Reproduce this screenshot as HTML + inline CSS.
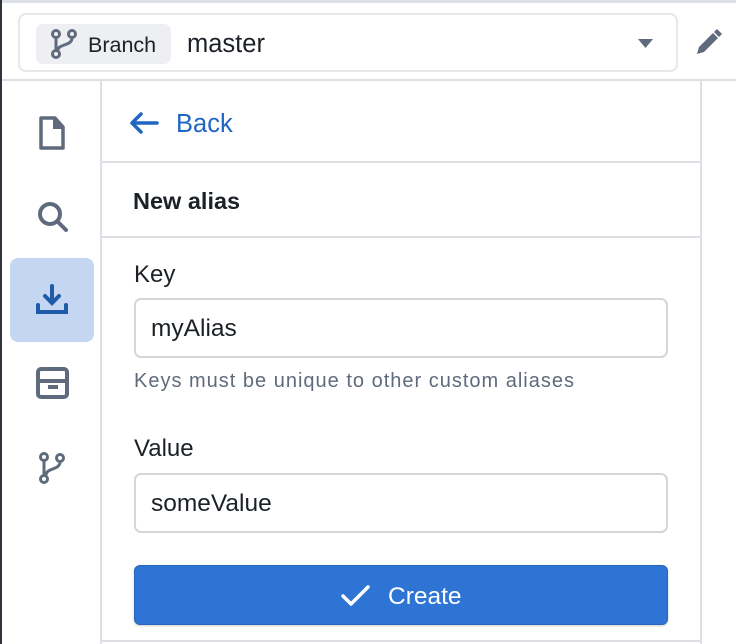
<!DOCTYPE html>
<html><head><style>
*{box-sizing:border-box;margin:0;padding:0}
body{width:736px;height:644px;overflow:hidden;background:#fff;font-family:"Liberation Sans",sans-serif;position:relative;color:#1c2127}
.a{position:absolute}
</style></head><body>
<div class="a" style="left:0;top:0;width:2px;height:644px;background:#2f343c"></div>
<div class="a" style="left:2px;top:0;width:734px;height:3px;background:#dcdfe3"></div>
<div class="a" style="left:18px;top:13px;width:660px;height:59px;border:2px solid #e5e8eb;border-radius:8px"></div>
<div class="a" style="left:36px;top:24px;width:135px;height:40px;background:#edeff2;border-radius:7px"></div>
<svg class="a" style="left:50px;top:28px" width="28" height="32" viewBox="0 0 28 32" fill="none" stroke="#5f6b7c" stroke-width="3"><circle cx="6" cy="6" r="3.5"/><circle cx="22" cy="6" r="3.5"/><circle cx="6" cy="26" r="3.5"/><path d="M6 10v12M22 10c0 8-14 6-14 12"/></svg>
<div class="a" style="left:88px;top:33px;font-size:21.5px;color:#1c2127">Branch</div>
<div class="a" style="left:187px;top:30px;font-size:25.5px;color:#1c2127">master</div>
<svg class="a" style="left:638px;top:38px" width="16" height="10"><path d="M0 1h15L7.5 10z" fill="#5f6b7c"/></svg>
<svg class="a" style="left:693px;top:27px" width="30" height="30" viewBox="0 0 30 30"><path d="M4 27l2-7L20 6l5 5L11 25z" fill="#5f6b7c"/><path d="M21 5l3-3 5 5-3 3z" fill="#5f6b7c"/></svg>
<div class="a" style="left:2px;top:79px;width:734px;height:2px;background:#dcdfe3"></div>
<div class="a" style="left:100px;top:81px;width:2px;height:563px;background:#dcdfe3"></div>
<div class="a" style="left:700px;top:81px;width:2px;height:563px;background:#dcdfe3"></div>
<svg class="a" style="left:39px;top:116px" width="26" height="34" viewBox="0 0 26 34"><path d="M2 2h14l8 9v21H2z" fill="none" stroke="#5f6b7c" stroke-width="3.5" stroke-linejoin="round"/><path d="M14 2v11h10" fill="#5f6b7c"/></svg>
<svg class="a" style="left:36px;top:200px" width="34" height="34" viewBox="0 0 34 34" fill="none" stroke="#5f6b7c" stroke-width="4"><circle cx="14" cy="14" r="10"/><path d="M22 22l8 8" stroke-linecap="round"/></svg>
<div class="a" style="left:10px;top:258px;width:84px;height:84px;background:#c4d6f2;border-radius:8px"></div>
<svg class="a" style="left:35px;top:283px" width="34" height="34" viewBox="0 0 34 34" fill="none" stroke="#1f5ba8" stroke-width="4" stroke-linecap="round"><path d="M17 3v17M10 13l7 7 7-7M3 22v7h28v-7"/></svg>
<svg class="a" style="left:36px;top:366px" width="34" height="34" viewBox="0 0 34 34" fill="none" stroke="#5f6b7c" stroke-width="4"><rect x="2" y="3" width="29" height="28" rx="3"/><path d="M2 15h29"/><path d="M12 21h10"/></svg>
<svg class="a" style="left:38px;top:451px" width="28" height="34" viewBox="0 0 28 34" fill="none" stroke="#5f6b7c" stroke-width="3"><circle cx="6" cy="6" r="3.5"/><circle cx="22" cy="7" r="3.5"/><circle cx="6" cy="28" r="3.5"/><path d="M6 10v14M22 11c0 8-14 6-14 13"/></svg>
<svg class="a" style="left:128px;top:111px" width="32" height="24" viewBox="0 0 32 24" fill="none" stroke="#2166c2" stroke-width="3.5" stroke-linecap="round" stroke-linejoin="round"><path d="M29 12H4M13 3l-9 9 9 9"/></svg>
<div class="a" style="left:176px;top:110px;font-size:25.5px;color:#2166c2">Back</div>
<div class="a" style="left:102px;top:161px;width:598px;height:2px;background:#dcdfe3"></div>
<div class="a" style="left:133px;top:188px;font-size:23.5px;font-weight:bold">New alias</div>
<div class="a" style="left:102px;top:236px;width:598px;height:2px;background:#dcdfe3"></div>
<div class="a" style="left:134px;top:261px;font-size:24px">Key</div>
<div class="a" style="left:134px;top:298px;width:534px;height:60px;border:2px solid #d3d6da;border-radius:7px"></div>
<div class="a" style="left:151px;top:315px;font-size:24.5px">myAlias</div>
<div class="a" style="left:134px;top:370px;font-size:20px;letter-spacing:1px;color:#5f6b7c">Keys must be unique to other custom aliases</div>
<div class="a" style="left:134px;top:435px;font-size:24px">Value</div>
<div class="a" style="left:134px;top:473px;width:534px;height:60px;border:2px solid #d3d6da;border-radius:7px"></div>
<div class="a" style="left:151px;top:490px;font-size:24.5px">someValue</div>
<div class="a" style="left:134px;top:565px;width:534px;height:60px;background:#2d74d4;border:1px solid #2766bd;border-radius:6px;box-shadow:0 1px 2px rgba(0,0,0,.2)"></div>
<svg class="a" style="left:340px;top:584px" width="32" height="24" viewBox="0 0 32 24" fill="none" stroke="#fff" stroke-width="3.5" stroke-linecap="round" stroke-linejoin="round"><path d="M3 12l8 8L28 3"/></svg>
<div class="a" style="left:388px;top:583px;font-size:24.5px;color:#fff">Create</div>
<div class="a" style="left:102px;top:640px;width:598px;height:2px;background:#dcdfe3"></div>
</body></html>
